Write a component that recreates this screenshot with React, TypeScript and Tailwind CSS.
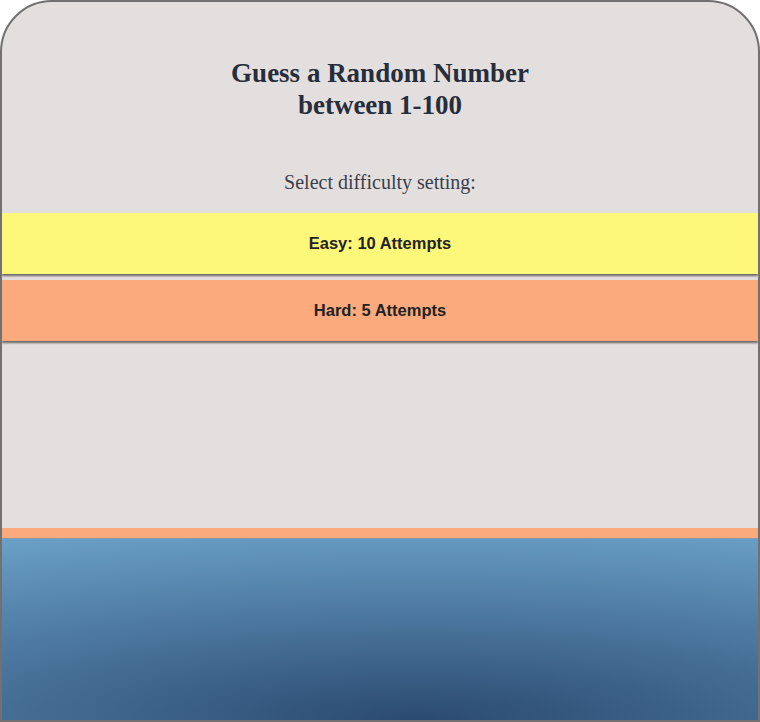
import React from "react";

const serif = { fontFamily: '"Liberation Serif", "Times New Roman", serif' };
const sans = { fontFamily: '"Liberation Sans", Arial, sans-serif' };

export default function App() {
    return (
        <div className="w-[760px] h-[722px] bg-white">
            <div className="h-full border-2 border-[#727070] rounded-t-[52px] bg-[#e4dfdf] overflow-hidden flex flex-col">
                <h1
                    className="mt-[55px] text-center text-[27px] leading-[32px] font-bold text-[#262d3b]"
                    style={serif}
                >
                    Guess a Random Number
                    <br />
                    between 1-100
                </h1>

                <p className="mt-[48px] text-center text-[20px] leading-[26px] text-[#3a3d48]" style={serif}>
                    Select difficulty setting:
                </p>

                <div className="mt-[18px] flex flex-col gap-[6px]">
                    <button
                        className="h-[61px] w-full bg-[#fef87a] text-[16.5px] font-bold text-[#222] shadow-[0_2px_2px_rgba(0,0,0,0.55)]"
                        style={sans}
                    >
                        Easy: 10 Attempts
                    </button>
                    <button
                        className="h-[61px] w-full bg-[#fbaa7e] text-[16.5px] font-bold text-[#222] shadow-[0_2px_2px_rgba(0,0,0,0.55)]"
                        style={sans}
                    >
                        Hard: 5 Attempts
                    </button>
                </div>

                <div className="flex-1" />

                <div className="h-[10px] bg-[#fbaa7e]" />
                <div className="h-[182px] border-t border-[#8a9aa8] bg-[radial-gradient(ellipse_130%_110%_at_55%_100%,#2b4a71_0%,#6aa0c7_100%)]" />
            </div>
        </div>
    );
}
